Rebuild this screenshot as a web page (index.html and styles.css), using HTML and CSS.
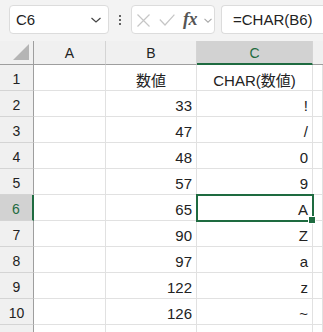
FILE: index.html
```html
<!DOCTYPE html>
<html lang="ja">
<head>
<meta charset="utf-8">
<link rel="stylesheet" href="styles.css">
</head>
<body>
<div class="toolbar">
  <div class="namebox">
    <span class="nb-text">C6</span>
    <svg class="chev" width="12" height="8" viewBox="0 0 12 8"><path d="M1.5 2 L6 6 L10.5 2" fill="none" stroke="#444" stroke-width="1.2"/></svg>
  </div>
  <div class="dots"><span></span><span></span><span></span></div>
  <div class="fxbox">
    <svg class="ic-x" width="13" height="13" viewBox="0 0 13 13"><path d="M0.5 0.5 L12.5 12.5 M12.5 0.5 L0.5 12.5" stroke="#c6c6c6" stroke-width="1.2" fill="none"/></svg>
    <svg class="ic-ok" width="16" height="12" viewBox="0 0 16 12"><path d="M0.8 5.5 L6 11 L15.4 0.6" stroke="#c6c6c6" stroke-width="1.2" fill="none"/></svg>
    <span class="fx">fx</span>
    <svg class="ic-dd" width="8" height="5" viewBox="0 0 8 5"><path d="M0.5 0.8 L4 4.2 L7.5 0.8" fill="none" stroke="#a8a8a8" stroke-width="1.1"/></svg>
  </div>
  <div class="formula">=CHAR(B6)</div>
</div>
<div class="sheet">
  <div class="corner"><div class="tri"></div></div>
  <div class="colh">A</div>
  <div class="colh">B</div>
  <div class="colh sel">C</div>
  <div class="colh last"></div>

  <div class="rowh">1</div><div class="c"></div><div class="c m">数値</div><div class="c m">CHAR(数値)</div><div class="c"></div>
  <div class="rowh">2</div><div class="c"></div><div class="c r">33</div><div class="c r">!</div><div class="c"></div>
  <div class="rowh">3</div><div class="c"></div><div class="c r">47</div><div class="c r">/</div><div class="c"></div>
  <div class="rowh">4</div><div class="c"></div><div class="c r">48</div><div class="c r">0</div><div class="c"></div>
  <div class="rowh">5</div><div class="c"></div><div class="c r">57</div><div class="c r">9</div><div class="c"></div>
  <div class="rowh sel">6</div><div class="c"></div><div class="c r">65</div><div class="c r active">A<span class="handle"></span></div><div class="c"></div>
  <div class="rowh">7</div><div class="c"></div><div class="c r">90</div><div class="c r">Z</div><div class="c"></div>
  <div class="rowh">8</div><div class="c"></div><div class="c r">97</div><div class="c r">a</div><div class="c"></div>
  <div class="rowh">9</div><div class="c"></div><div class="c r">122</div><div class="c r">z</div><div class="c"></div>
  <div class="rowh">10</div><div class="c"></div><div class="c r">126</div><div class="c r">~</div><div class="c"></div>
  <div class="rowh"></div><div class="c"></div><div class="c"></div><div class="c"></div><div class="c"></div>
</div>
</body>
</html>
```
FILE: styles.css
```css
html, body {
  margin: 0;
  padding: 0;
  background: #ffffff;
  font-family: "Liberation Sans", "Noto Sans CJK JP", sans-serif;
  overflow: hidden;
}
.toolbar {
  height: 41px;
  background: #f3f3f3;
  display: flex;
  align-items: flex-start;
  padding: 5px 0 0 9px;
  box-sizing: border-box;
}
.namebox {
  width: 100px;
  height: 29px;
  box-sizing: border-box;
  background: #fff;
  border: 1px solid #dcdcdc;
  border-radius: 4px;
  display: flex;
  align-items: center;
  justify-content: space-between;
  padding: 0 6px 0 6px;
}
.nb-text {
  font-size: 15px;
  color: #222;
}
.dots {
  width: 22px;
  height: 29px;
  display: flex;
  flex-direction: column;
  align-items: center;
  justify-content: center;
  gap: 2px;
}
.dots span {
  width: 2px;
  height: 2px;
  background: #333;
  border-radius: 1px;
}
.fxbox {
  width: 84px;
  height: 29px;
  box-sizing: border-box;
  background: #fff;
  border: 1px solid #dcdcdc;
  border-radius: 4px;
  display: flex;
  align-items: center;
  padding: 0 0 0 5px;
}
.ic-x {
  margin-top: 1px;
}
.ic-ok {
  margin-left: 9px;
  margin-top: 1px;
}
.fx {
  font-family: "Liberation Serif", serif;
  font-style: italic;
  font-weight: bold;
  font-size: 18px;
  color: #555;
  margin-left: 8px;
  width: 17px;
  letter-spacing: -0.5px;
}
.ic-dd {
  margin-left: 4px;
  margin-top: 2px;
}
.formula {
  margin-left: 6px;
  flex: 1;
  height: 29px;
  box-sizing: border-box;
  background: #fff;
  border: 1px solid #dcdcdc;
  border-right: none;
  border-radius: 4px 0 0 4px;
  display: flex;
  align-items: center;
  padding-left: 11px;
  font-size: 15px;
  color: #222;
}
.sheet {
  display: grid;
  grid-template-columns: 34px 72px 91px 116px 1fr;
  grid-template-rows: 24px repeat(10, 26px) 8px;
}
.corner, .colh, .rowh, .c {
  box-sizing: border-box;
}
.corner {
  background: #f0f0f0;
  border-right: 1px solid #9e9e9e;
  border-bottom: 1px solid #9e9e9e;
  position: relative;
}
.tri {
  position: absolute;
  right: 4px;
  bottom: 4px;
  width: 0;
  height: 0;
  border-left: 16px solid transparent;
  border-bottom: 16px solid #b5b5b5;
}
.colh {
  background: #f0f0f0;
  border-right: 1px solid #d4d4d4;
  border-bottom: 1px solid #9e9e9e;
  display: flex;
  align-items: center;
  justify-content: center;
  font-size: 14px;
  color: #222;
}
.colh.sel {
  background: #d2d2d2;
  border-bottom: 2px solid #1e6b40;
  color: #1e6b40;
  padding-top: 1px;
}
.colh.last {
  border-right: none;
}
.rowh {
  background: #f0f0f0;
  border-right: 1px solid #9e9e9e;
  border-bottom: 1px solid #d4d4d4;
  display: flex;
  align-items: center;
  justify-content: center;
  font-size: 14px;
  color: #222;
  padding-top: 2px;
}
.rowh.sel {
  background: #d2d2d2;
  border-right: 2px solid #1e6b40;
  color: #1e6b40;
}
.c {
  border-right: 1px solid #e1e1e1;
  border-bottom: 1px solid #e1e1e1;
  font-size: 15px;
  color: #222;
  display: flex;
  align-items: center;
  padding: 3px 4px 0 4px;
}
.c.r {
  justify-content: flex-end;
}
.c.m {
  justify-content: center;
}
.c.active {
  position: relative;
  outline: 2px solid #1e6b40;
  outline-offset: -1px;
  z-index: 1;
}
.handle {
  position: absolute;
  right: -4px;
  bottom: -4px;
  width: 6px;
  height: 6px;
  background: #1e6b40;
  border: 1px solid #fff;
}
```
